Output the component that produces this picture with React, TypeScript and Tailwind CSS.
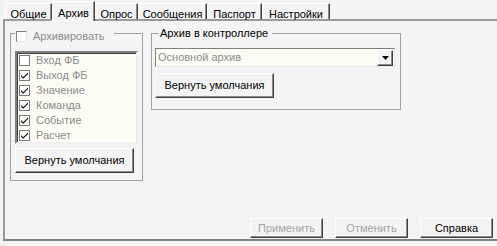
import React from 'react';

const tabs = [
  { label: 'Общие', w: 'w-[47px]' },
  { label: 'Архив', w: 'w-[43px]', active: true },
  { label: 'Опрос', w: 'w-[43px]' },
  { label: 'Сообщения', w: 'w-[69px]' },
  { label: 'Паспорт', w: 'w-[55px]' },
  { label: 'Настройки', w: 'w-[68px]' },
];

const items = [
  { label: 'Вход ФБ', checked: false },
  { label: 'Выход ФБ', checked: true },
  { label: 'Значение', checked: true },
  { label: 'Команда', checked: true },
  { label: 'Событие', checked: true },
  { label: 'Расчет', checked: true },
];

function Check({ checked, sunken }: { checked?: boolean; sunken?: boolean }) {
  return (
    <span
      className={
        sunken
          ? 'flex h-[11px] w-[11px] shrink-0 items-center justify-center border border-t-[#808080] border-l-[#808080] border-r-[#e6e6e6] border-b-[#e6e6e6] bg-white'
          : 'flex h-[11px] w-[11px] shrink-0 items-center justify-center border border-[#7a7a7a] bg-white'
      }
    >
      {checked && (
        <svg width="7" height="7" viewBox="0 0 7 7">
          <path d="M0 3 L0 4.6 L2.2 6.8 L7 2 L7 0.4 L2.2 5.2 Z" fill="#000" />
        </svg>
      )}
    </span>
  );
}

function Btn({ children, disabled, className }: { children: React.ReactNode; disabled?: boolean; className: string }) {
  return (
    <button
      className={`flex shrink-0 items-center justify-center border border-t-white border-l-white border-r-[#404040] border-b-[#404040] bg-[#f4f4f4] shadow-[inset_-1px_-1px_0_#8c8c8c] text-[11px] leading-none ${
        disabled ? 'text-[#a3a3a3]' : 'text-black'
      } ${className}`}
    >
      {children}
    </button>
  );
}

export default function App() {
  return (
    <div className="h-[246px] w-[497px] overflow-hidden bg-[#f4f4f4] font-['Liberation_Sans',Arial,sans-serif] text-[11px] text-black">
      {/* tabs */}
      <div className="flex h-[19px] items-end pl-[5px]">
        {tabs.map((t) =>
          t.active ? (
            <div
              key={t.label}
              className={`relative z-10 -mb-[2px] flex h-[20px] items-start justify-center border-t border-l border-t-white border-l-white border-r border-r-[#404040] bg-[#f4f4f4] pt-[3px] shadow-[inset_-1px_0_0_#8c8c8c] ${t.w}`}
            >
              {t.label}
            </div>
          ) : (
            <div
              key={t.label}
              className={`flex h-[16px] items-start justify-center border-t border-l border-t-white border-l-white border-r border-r-[#404040] pt-[2px] shadow-[inset_-1px_0_0_#8c8c8c] ${t.w}`}
            >
              {t.label}
            </div>
          )
        )}
      </div>

      {/* page */}
      <div className="ml-[3px] flex h-[222px] flex-col border-t-2 border-l-2 border-b-2 border-t-[#9a9a9a] border-l-[#9a9a9a] border-b-[#808080] pt-[5px] pr-[4px]">
        <div className="flex items-start">
          {/* left group */}
          <fieldset className="ml-[5px] w-[133px] border border-[#a0a0a0] p-0">
            <legend className="ml-[4px] flex h-[14px] items-center pl-[1px] pr-[9px]">
              <span className="flex translate-y-[3px] items-center gap-[6px] text-[#8c8c8c]">
                <Check sunken />
                Архивировать
              </span>
            </legend>
            <div className="flex flex-col px-1 pt-[11px] pb-[7px]">
              <div className="flex h-[93px] flex-col border-2 border-t-[#808080] border-l-[#808080] border-r-[#f0f0f0] border-b-[#f0f0f0] bg-[#fcfcf5] pl-[2px] shadow-[inset_1px_1px_0_#404040]">
                {items.map((it) => (
                  <div key={it.label} className="flex h-[15px] items-center gap-[6px] text-[#8c8c8c]">
                    <Check checked={it.checked} />
                    {it.label}
                  </div>
                ))}
              </div>
              <Btn className="mt-[4px] h-[25px] w-[119px]">Вернуть умолчания</Btn>
            </div>
          </fieldset>

          {/* right group */}
          <fieldset className="ml-[8px] w-[250px] border border-[#a0a0a0] p-0">
            <legend className="ml-[6px] flex h-[14px] items-center pl-[2px] pr-[4px]">Архив в контроллере</legend>
            <div className="flex flex-col pl-[3px] pt-[8px] pb-[11px]">
              <div className="flex h-[19px] w-[240px] items-center border border-t-[#808080] border-l-[#808080] border-r-[#e8e8e8] border-b-[#e8e8e8] bg-[#fcfcf5] p-[1px]">
                <span className="flex-1 pl-[1px] text-[#8c8c8c]">Основной архив</span>
                <span className="flex h-[16px] w-[16px] items-center justify-center border border-t-white border-l-white border-r-[#404040] border-b-[#404040] bg-[#f4f4f4] shadow-[inset_-1px_-1px_0_#8c8c8c]">
                  <svg width="7" height="4" viewBox="0 0 7 4">
                    <path d="M0 0 H7 L3.5 4 Z" fill="#000" />
                  </svg>
                </span>
              </div>
              <Btn className="mt-[6px] h-[25px] w-[119px]">Вернуть умолчания</Btn>
            </div>
          </fieldset>
        </div>

        <div className="flex-1" />

        <div className="mb-[1px] flex justify-end gap-[12px]">
          <Btn disabled className="h-[20px] w-[73px]">Применить</Btn>
          <Btn disabled className="h-[20px] w-[73px]">Отменить</Btn>
          <Btn className="h-[20px] w-[73px]">Справка</Btn>
        </div>
      </div>
    </div>
  );
}
